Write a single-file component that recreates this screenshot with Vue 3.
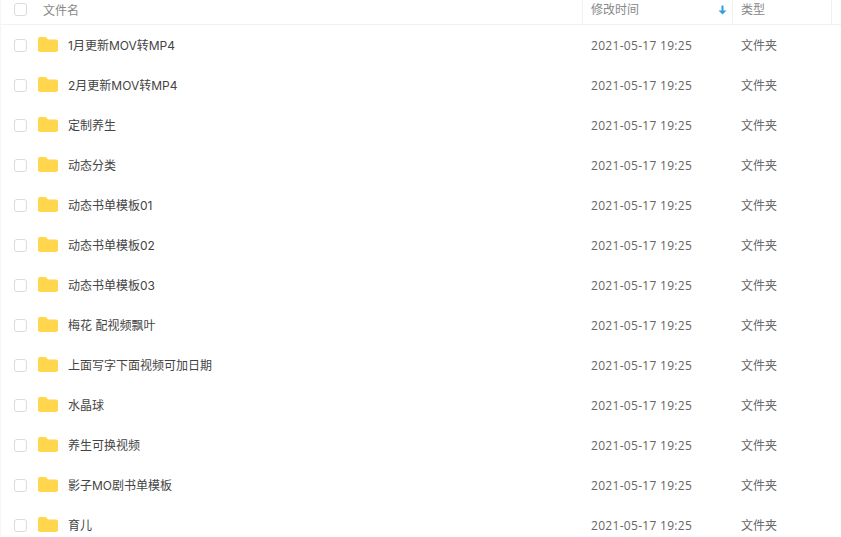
<template>
  <div class="file-list">
    <div class="head">
      <div class="col-name">
        <span class="check"></span>
        <span class="head-label">文件名</span>
      </div>
      <div class="col-time">
        <span>修改时间</span>
        <svg class="sort" width="9" height="10" viewBox="0 0 9 10">
          <path d="M3.500 0.500h2v5h3L4.500 9.500 0.500 5.500h3z" fill="#2e9fe0" />
        </svg>
      </div>
      <div class="col-type">类型</div>
    </div>
    <div v-for="file in files" :key="file" class="row">
      <div class="col-name">
        <span class="check"></span>
        <svg class="folder" width="20" height="15" viewBox="0 0 20 15">
          <path d="M2 0h5c.8 0 1.300.3 1.800.9L10 2.500h8c1.100 0 2 .9 2 2V13c0 1.100-.9 2-2 2H2c-1.100 0-2-.9-2-2V2C0 .9.900 0 2 0z" fill="#ffd64d" />
        </svg>
        <span class="name">{{ file }}</span>
      </div>
      <div class="col-time time">2021-05-17 19:25</div>
      <div class="col-type type">文件夹</div>
    </div>
  </div>
</template>

<script setup>
const files = [
  '1月更新MOV转MP4',
  '2月更新MOV转MP4',
  '定制养生',
  '动态分类',
  '动态书单模板01',
  '动态书单模板02',
  '动态书单模板03',
  '梅花 配视频飘叶',
  '上面写字下面视频可加日期',
  '水晶球',
  '养生可换视频',
  '影子MO剧书单模板',
  '育儿',
]
</script>

<style>
html, body {
  margin: 0;
  background: #fff;
  overflow: hidden;
}
</style>

<style scoped>
.file-list {
  width: 841px;
  height: 537px;
  overflow: hidden;
  font-family: Inter, "Noto Sans CJK SC", sans-serif;
  font-size: 12px;
  color: #666;
  border-left: 1px solid #f5f5f5;
  box-sizing: border-box;
}

.head,
.row {
  display: grid;
  grid-template-columns: 581px 150px 100px;
  align-items: center;
}

.head {
  height: 25px;
  border-bottom: 1px solid #f2f2f2;
  box-sizing: border-box;
  color: #888;
}

.row {
  height: 40px;
}

.col-name {
  display: flex;
  align-items: center;
  padding-left: 13px;
}

.col-time,
.col-type {
  padding-left: 9px;
  box-sizing: border-box;
}

.time {
  font-family: "Open Sans", sans-serif;
  letter-spacing: 0.3px;
}

.type {
  margin-bottom: 2px;
}

.head .col-time,
.head .col-type {
  height: 24px;
  display: flex;
  align-items: center;
  padding-bottom: 7px;
  padding-left: 8px;
  border-left: 1px solid #f0f0f0;
}

.head .col-name {
  padding-bottom: 5px;
}

.head .col-type {
  border-right: 1px solid #f0f0f0;
}

.sort {
  margin-left: auto;
  margin-right: 5px;
  margin-top: 3px;
}

.check {
  width: 11px;
  height: 11px;
  border: 1px solid #dcdcdc;
  border-radius: 3px;
  flex: none;
}

.head-label {
  margin-left: 16px;
}

.folder {
  margin-left: 11px;
  margin-top: -1px;
  flex: none;
}

.name {
  margin-left: 10px;
  margin-bottom: 2px;
  color: #444;
}
</style>
